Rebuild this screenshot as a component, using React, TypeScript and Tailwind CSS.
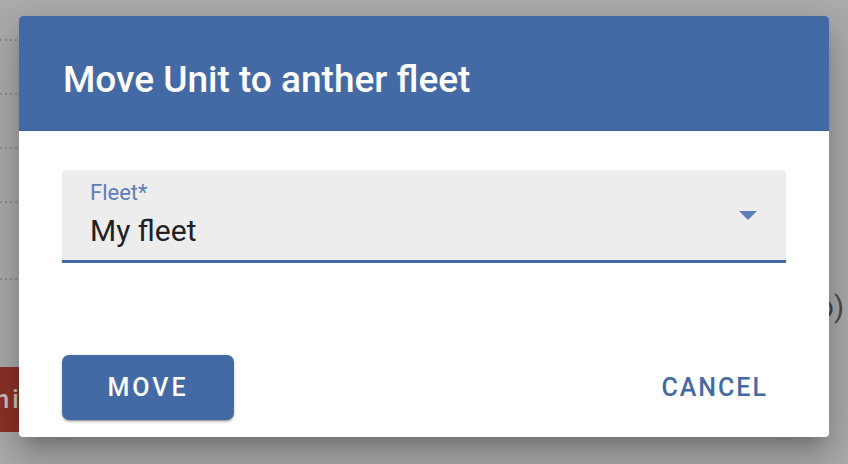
import React from 'react'

const font = { fontFamily: 'Roboto, "Noto Sans", Arial, sans-serif' }

function DottedRule({ className }: { className: string }) {
  return (
    <div className={`flex gap-[3px] ${className}`}>
      {[0, 1, 2, 3].map((i) => (
        <span key={i} className="block h-[2px] w-[2px] bg-[#8e8e8e]" />
      ))}
    </div>
  )
}

export default function App() {
  return (
    <div className="relative h-[464px] w-[848px] overflow-hidden bg-[#adadad]" style={font}>
      {/* page behind the backdrop */}
      <div className="flex h-full w-full justify-between">
        <div className="flex flex-col">
          <DottedRule className="mt-[39px]" />
          <DottedRule className="mt-[52px]" />
          <DottedRule className="mt-[52px]" />
          <DottedRule className="mt-[52px]" />
          <DottedRule className="mt-[75px]" />
          <div className="mt-[87px] flex h-[65px] w-[60px] items-center overflow-hidden bg-[#8f3328]">
            <span className="-ml-[24px] text-[25px] font-medium tracking-[0.12em] text-[#c9c9c9]">
              Unit
            </span>
          </div>
        </div>
        <div className="pt-[286px] pr-[4px]">
          <span className="text-[29px] text-[#4a4a4a]">o)</span>
        </div>
      </div>

      {/* dialog */}
      <div className="absolute left-[19px] top-[16px] w-[810px] overflow-hidden rounded-[4px] bg-white shadow-[0_11px_15px_-7px_rgba(0,0,0,0.2),0_24px_38px_3px_rgba(0,0,0,0.14),0_9px_46px_8px_rgba(0,0,0,0.12)]">
        <div className="border-b border-[#3c6299] bg-[#436aa5] px-[44px] pt-[42px] pb-[29px]">
          <h2 className="text-[37px] font-medium leading-[43px] text-white">
            Move Unit to anther fleet
          </h2>
        </div>

        <div className="px-[43px] pt-[39px]">
          <div className="flex items-center justify-between rounded-t-[5px] border-b-[3px] border-[#436aa5] bg-[#ededed] pr-[29px] pl-[28px] pt-[11px] pb-[12px]">
            <div className="flex flex-col">
              <span className="text-[22px] leading-[24px] text-[#5b80b9]">Fleet*</span>
              <span className="mt-[9px] text-[30px] leading-[34px] text-[#212121]">My fleet</span>
            </div>
            <svg width="18" height="9" viewBox="0 0 18 9" className="mt-[2px]">
              <path d="M0 0 L18 0 L9 9 Z" fill="#5b80b9" />
            </svg>
          </div>
        </div>

        <div className="flex items-center justify-between pt-[92px] pr-[61px] pb-[17px] pl-[43px]">
          <button className="h-[65px] w-[172px] rounded-[7px] bg-[#436aa5] text-[25px] font-medium tracking-[0.12em] text-white shadow-[0_3px_1px_-2px_rgba(0,0,0,0.2),0_2px_2px_0_rgba(0,0,0,0.14),0_1px_5px_0_rgba(0,0,0,0.12)]">
            MOVE
          </button>
          <button className="text-[25px] font-medium tracking-[0.08em] text-[#436aa5]">
            CANCEL
          </button>
        </div>
      </div>
    </div>
  )
}
